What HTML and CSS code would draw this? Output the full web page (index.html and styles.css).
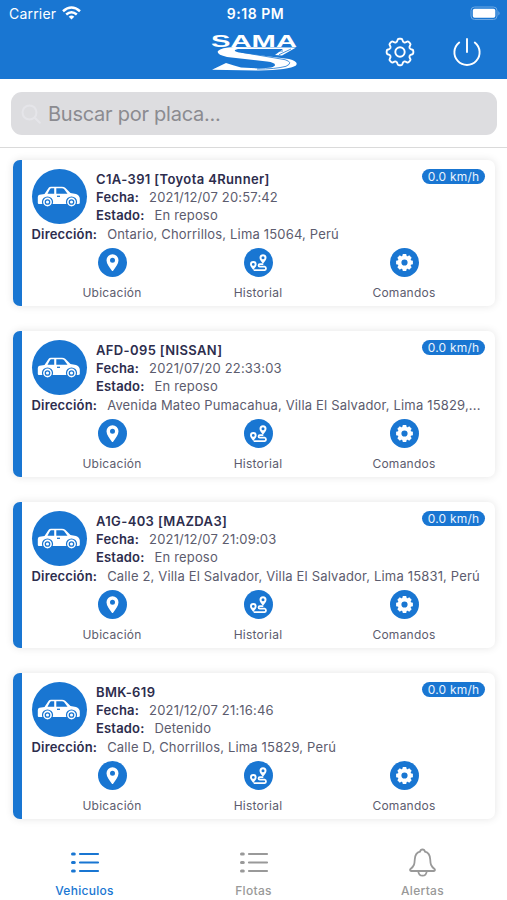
FILE: index.html
```
<!DOCTYPE html>
<html lang="es">
<head>
<meta charset="utf-8">
<title>Vehiculos</title>
<link rel="stylesheet" href="styles.css">
</head>
<body>
<svg class="defs" aria-hidden="true">
  <symbol id="car" viewBox="0 0 44 22">
    <path fill="#fff" fill-rule="evenodd" d="M7.500 8 11.500 2Q12.300 .7 14 .7H25Q27 .7 28.500 2L33.500 7 39 8Q42.500 9 42.800 12.500V17Q42.800 18 41 18H1.800Q.8 18 .8 17V11Q.8 9 2.500 8.700ZM10.500 7.800H17.200V2.300H14.300Q13.400 2.300 12.800 3.400ZM19.300 2.300V7.800H30.500L27 3.100Q26.300 2.300 25 2.300Z"/>
    <path d="M20 10.300h3" stroke="#1976d2" stroke-width="1.300"/>
    <g fill="#fff" stroke="#1976d2" stroke-width="1.200"><circle cx="10.500" cy="16" r="5"/><circle cx="34.500" cy="16" r="5"/></g>
    <g fill="#fff" stroke="#1976d2" stroke-width="1.300"><circle cx="10.500" cy="16" r="2.200"/><circle cx="34.500" cy="16" r="2.200"/></g>
  </symbol>
  <symbol id="pin" viewBox="0 0 29 29">
    <path fill="#fff" fill-rule="evenodd" d="M14.500 6.200a6 6 0 0 1 6 6c0 3.600-3 6.800-5.200 10.400q-.8 1-1.600 0c-2.200-3.600-5.200-6.800-5.200-10.400a6 6 0 0 1 6-6Zm0 3.500a2.500 2.500 0 1 0 0 5 2.500 2.500 0 0 0 0-5Z"/>
  </symbol>
  <symbol id="route" viewBox="0 0 29 29">
    <path fill="#fff" fill-rule="evenodd" d="M19 6.300a3.500 3.500 0 0 1 3.500 3.500c0 2-2 3.800-3.500 6-1.500-2.200-3.500-4-3.500-6a3.500 3.500 0 0 1 3.500-3.500Zm0 2a1.500 1.500 0 1 0 0 3 1.500 1.500 0 0 0 0-3ZM9.300 13a3.300 3.300 0 0 1 3.300 3.300c0 2-1.800 3.700-3.300 5.700-1.500-2-3.300-3.700-3.300-5.700A3.300 3.300 0 0 1 9.300 13Zm0 2a1.400 1.400 0 1 0 0 2.800 1.400 1.400 0 0 0 0-2.800Z"/>
    <path fill="none" stroke="#fff" stroke-width="1.800" stroke-linecap="round" d="M18.500 16.200h-2.700a1.200 1.200 0 0 0 0 2.500h4.800a1.800 1.800 0 0 1 0 3.500H10.500"/>
  </symbol>
  <symbol id="cog" viewBox="-14.500 -14.500 29 29">
    <g fill="#fff"><path id="tooth" d="M-2.600-5-1.700-8.400h3.400L2.600-5Z"/><use href="#tooth" transform="rotate(45)"/><use href="#tooth" transform="rotate(90)"/><use href="#tooth" transform="rotate(135)"/><use href="#tooth" transform="rotate(180)"/><use href="#tooth" transform="rotate(225)"/><use href="#tooth" transform="rotate(270)"/><use href="#tooth" transform="rotate(315)"/></g>
    <circle r="4.900" fill="none" stroke="#fff" stroke-width="3.600"/>
  </symbol>
  <symbol id="list" viewBox="0 0 30 22">
    <path fill="none" stroke="currentColor" stroke-width="2.200" stroke-linecap="round" d="M10 2h18M10 10.500h18M10 19h18"/>
    <path fill="none" stroke="currentColor" stroke-width="3" stroke-linecap="round" d="M2.500 2h1.800M2.500 10.500h1.800M2.500 19h1.800"/>
  </symbol>
</svg>
<header class="top">
  <div class="status">
    <div class="carrier">Carrier
      <svg width="19" height="14" viewBox="0 0 19 14"><g fill="none" stroke="#fff" stroke-width="2.500"><path d="M1 5.300Q9.500-2.300 18 5.300"/><path d="M4.200 8.500Q9.500 3.900 14.800 8.500"/></g><path fill="#fff" d="M6.700 10.700Q9.500 8.500 12.300 10.700L9.500 13.600Z"/></svg>
    </div>
    <div class="time">9:18 PM</div>
    <div class="battery"><svg width="32" height="15" viewBox="0 0 32 15"><rect x="1" y="1" width="26" height="12.500" rx="3.500" fill="none" stroke="#6ea9e3"/><rect x="2.800" y="2.800" width="22.500" height="9" rx="1.800" fill="#fff"/><path fill="#86b8e9" d="M28.500 5q2 2.300 0 4.500Z"/></svg></div>
  </div>
  <svg class="logo" width="90" height="42" viewBox="0 0 90 42">
    <text x="2" y="15" textLength="86" lengthAdjust="spacingAndGlyphs">SAMA</text>
    <path fill="#fff" d="M87 15.500 73 23.500 66 23 74 17 29 17Q22 18.500 30 20.500L80 27Q90 29.500 87 33.500Q80 38 50 38.500L3 37.800 17 31 25 33.500 32 35.500 50 36.500Q66 36 66 33 66 30.500 58 29.500L18 25Q7 22.500 9 19 12 15.500 25 15Z"/>
    <path fill="none" stroke="#1976d2" stroke-width=".8" d="M82 17 70 22.700M74 19H36Q28 19.500 35 20.700L76 27.700Q85 30.500 77 34.300 66 37.200 48 37"/>
  </svg>
  <div class="actions">
    <svg width="30" height="30" viewBox="-15 -15 30 30"><g fill="none" stroke="#fff" stroke-width="1.900"><path id="lobe" d="M-4-9.600C-2.700-10.100-2.700-10.900-2.500-11.900Q-2.200-13.300-1-13.300H1Q2.200-13.300 2.500-11.900C2.700-10.900 2.700-10.100 4-9.600"/><use href="#lobe" transform="rotate(45)"/><use href="#lobe" transform="rotate(90)"/><use href="#lobe" transform="rotate(135)"/><use href="#lobe" transform="rotate(180)"/><use href="#lobe" transform="rotate(225)"/><use href="#lobe" transform="rotate(270)"/><use href="#lobe" transform="rotate(315)"/><circle r="4.700"/></g></svg>
    <svg width="30" height="30" viewBox="0 0 30 30"><path fill="none" stroke="#fff" stroke-width="1.900" stroke-linecap="round" d="M15 2v13M7.200 5.500a12.600 12.600 0 1 0 15.600 0"/></svg>
  </div>
</header>
<div class="search"><div class="field">
  <svg width="20" height="20" viewBox="0 0 20 20"><g fill="none" stroke="#e5e5e9" stroke-width="2" stroke-linecap="round"><circle cx="8.500" cy="8.500" r="7"/><path d="m13.800 13.800 5 5"/></g></svg>
  <span>Buscar por placa...</span>
</div></div>
<main class="cards">
  <article class="card">
    <div class="avatar"><svg width="44" height="22"><use href="#car"/></svg></div>
    <div class="info"><h2>C1A-391 [Toyota 4Runner]</h2><p><b>Fecha:</b>2021/12/07 20:57:42</p><p><b>Estado:</b>En reposo</p></div>
    <span class="speed">0.0 km/h</span>
    <p class="address"><b>Dirección:</b>Ontario, Chorrillos, Lima 15064, Perú</p>
    <div class="buttons">
      <div><i><svg><use href="#pin"/></svg></i>Ubicación</div>
      <div><i><svg><use href="#route"/></svg></i>Historial</div>
      <div><i><svg><use href="#cog"/></svg></i>Comandos</div>
    </div>
  </article>
  <article class="card">
    <div class="avatar"><svg width="44" height="22"><use href="#car"/></svg></div>
    <div class="info"><h2>AFD-095 [NISSAN]</h2><p><b>Fecha:</b>2021/07/20 22:33:03</p><p><b>Estado:</b>En reposo</p></div>
    <span class="speed">0.0 km/h</span>
    <p class="address"><b>Dirección:</b>Avenida Mateo Pumacahua, Villa El Salvador, Lima 15829,...</p>
    <div class="buttons">
      <div><i><svg><use href="#pin"/></svg></i>Ubicación</div>
      <div><i><svg><use href="#route"/></svg></i>Historial</div>
      <div><i><svg><use href="#cog"/></svg></i>Comandos</div>
    </div>
  </article>
  <article class="card">
    <div class="avatar"><svg width="44" height="22"><use href="#car"/></svg></div>
    <div class="info"><h2>A1G-403 [MAZDA3]</h2><p><b>Fecha:</b>2021/12/07 21:09:03</p><p><b>Estado:</b>En reposo</p></div>
    <span class="speed">0.0 km/h</span>
    <p class="address"><b>Dirección:</b>Calle 2, Villa El Salvador, Villa El Salvador, Lima 15831, Perú</p>
    <div class="buttons">
      <div><i><svg><use href="#pin"/></svg></i>Ubicación</div>
      <div><i><svg><use href="#route"/></svg></i>Historial</div>
      <div><i><svg><use href="#cog"/></svg></i>Comandos</div>
    </div>
  </article>
  <article class="card">
    <div class="avatar"><svg width="44" height="22"><use href="#car"/></svg></div>
    <div class="info"><h2>BMK-619</h2><p><b>Fecha:</b>2021/12/07 21:16:46</p><p><b>Estado:</b>Detenido</p></div>
    <span class="speed">0.0 km/h</span>
    <p class="address"><b>Dirección:</b>Calle D, Chorrillos, Lima 15829, Perú</p>
    <div class="buttons">
      <div><i><svg><use href="#pin"/></svg></i>Ubicación</div>
      <div><i><svg><use href="#route"/></svg></i>Historial</div>
      <div><i><svg><use href="#cog"/></svg></i>Comandos</div>
    </div>
  </article>
</main>
<nav class="tabs">
  <div class="tab active"><svg width="30" height="30" viewBox="0 0 30 30"><use href="#list" y="5" width="30" height="22"/></svg>Vehiculos</div>
  <div class="tab"><svg width="30" height="30" viewBox="0 0 30 30"><use href="#list" y="5" width="30" height="22"/></svg>Flotas</div>
  <div class="tab"><svg width="30" height="30" viewBox="0 0 30 30"><g fill="none" stroke="currentColor" stroke-width="1.800" stroke-linejoin="round"><path d="M14.500 2.500c1.500 0 2.200.8 2.500 2.200 3.500 1 5 3.800 5.200 7.500.3 5 .6 7 4.300 9.800.8.800.5 2-.6 2H3.100c-1.100 0-1.400-1.200-.6-2C6.200 19.200 6.500 17.200 6.800 12.200c.2-3.700 1.700-6.500 5.200-7.500.3-1.400 1-2.200 2.500-2.200Z"/><path d="M10.200 24c.3 3 2 4.700 4.300 4.700s4-1.700 4.300-4.700"/></g></svg>Alertas</div>
</nav>
</body>
</html>
```
FILE: styles.css
```
* { box-sizing: border-box; }
body { margin: 0; width: 507px; height: 900px; overflow: hidden; display: flex; flex-direction: column; background: #fff; font-family: Inter, "Liberation Sans", sans-serif; color: #5c5c6e; }
.defs { position: absolute; width: 0; height: 0; }
h2, p { margin: 0; }
svg { display: block; flex: none; }
.top { height: 79px; flex: none; background: #1976d2; color: #fff; display: grid; grid-template-columns: 1fr 90px 1fr; grid-template-rows: 32px 47px; }
.status { grid-column: 1 / 4; grid-row: 1; height: 27px; padding: 0 5px 0 9px; display: grid; grid-template-columns: 1fr auto 1fr; align-items: center; font-size: 14px; letter-spacing: .2px; }
.carrier { display: flex; align-items: center; gap: 6px; }
.carrier svg { margin-top: -2px; }
.time { font-weight: 600; font-size: 14px; letter-spacing: .5px; }
.battery { justify-self: end; margin-top: -1px; }
.logo { grid-column: 2; grid-row: 2; }
.logo text { font: bold 17px "Liberation Sans", sans-serif; fill: #fff; }
.actions { grid-column: 3; grid-row: 2; display: flex; justify-content: flex-end; gap: 37px; padding: 5px 25px 0 0; }
.search { height: 69px; flex: none; padding: 13px 10px 0 11px; border-bottom: 1px solid #dadada; }
.field { height: 43px; border-radius: 11px; background: #dddde0; display: flex; align-items: center; padding-left: 10px; gap: 7px; font-size: 20px; letter-spacing: -.25px; color: #8b8b90; }
.field span { padding-top: 1px; }
.cards { flex: none; padding: 12px 13px 0; display: flex; flex-direction: column; gap: 25px; }
.card { height: 146px; width: 482px; border-left: 9px solid #1976d2; border-radius: 7px; background: #fff; box-shadow: 0 0 9px rgba(0, 0, 0, .11); padding: 9px 10px 0; display: grid; grid-template-columns: 55px 1fr auto; grid-template-rows: 55px 19px 60px; column-gap: 9px; font-size: 13px; line-height: 18.300px; letter-spacing: .17px; }
.avatar { width: 55px; height: 55px; border-radius: 50%; background: #1976d2; display: grid; place-items: center; padding-top: 1px; margin-left: -.5px; }
.info { padding-top: .5px; white-space: nowrap; }
.card h2 { font-size: 13px; font-weight: 600; line-height: 18.300px; letter-spacing: .37px; color: #2d2d4d; }
.card b { font-weight: 600; color: #2d2d4d; margin-right: 10px; }
.speed { height: 15px; width: 63px; border-radius: 8px; background: #1976d2; color: #eaf3fd; font-size: 12px; line-height: 15px; text-align: center; letter-spacing: .2px; }
.address { grid-column: 1 / 4; white-space: nowrap; padding-top: 1px; margin-left: -.5px; }
.buttons { grid-column: 1 / 4; padding: 5px 0 0 7px; display: grid; grid-template-columns: repeat(3, 146px); text-align: center; font-size: 12px; letter-spacing: .25px; }
.buttons div { display: flex; flex-direction: column; align-items: center; gap: 7px; }
.buttons i { width: 29px; height: 29px; border-radius: 50%; background: #1976d2; }
.buttons svg { width: 29px; height: 29px; }
.tabs { margin-top: auto; height: 60px; flex: none; padding: 7px 0 0; display: grid; grid-template-columns: repeat(3, 1fr); color: #999; font-size: 12px; font-weight: 500; letter-spacing: .3px; }
.tab { display: flex; flex-direction: column; align-items: center; gap: 6px; }
.tab.active { color: #1976d2; }
```
